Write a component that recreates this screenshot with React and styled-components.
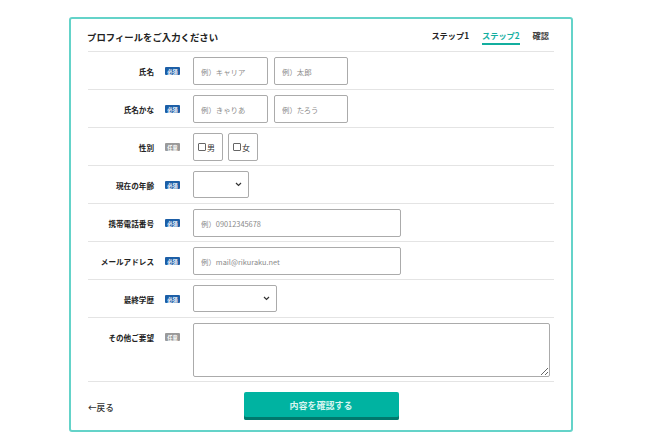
import styled, { createGlobalStyle } from "styled-components";

const GlobalStyle = createGlobalStyle`
  body {
    margin: 0;
    background: #fff;
    font-family: "Noto Sans CJK JP", "Noto Sans", sans-serif;
    color: #222;
  }
`;

const fields = [
  { label: "氏名", required: true, type: "pair", placeholders: ["例）キャリア", "例）太郎"] },
  { label: "氏名かな", required: true, type: "pair", placeholders: ["例）きゃりあ", "例）たろう"] },
  { label: "性別", required: false, type: "gender" },
  { label: "現在の年齢", required: true, type: "select", width: 56 },
  { label: "携帯電話番号", required: true, type: "text", placeholder: "例）09012345678" },
  { label: "メールアドレス", required: true, type: "text", placeholder: "例）mail@rikuraku.net" },
  { label: "最終学歴", required: true, type: "select", width: 84 },
  { label: "その他ご要望", required: false, type: "textarea" },
];

const Page = () => {
  const renderField = (f) => {
    if (f.type === "pair") {
      return (
        <Inline>
          <TextInput $w={75} placeholder={f.placeholders[0]} />
          <TextInput $w={74} placeholder={f.placeholders[1]} />
        </Inline>
      );
    }
    if (f.type === "gender") {
      return (
        <Inline>
          <CheckItem>
            <input type="checkbox" />
            <span>男</span>
          </CheckItem>
          <CheckItem>
            <input type="checkbox" />
            <span>女</span>
          </CheckItem>
        </Inline>
      );
    }
    if (f.type === "select") {
      return (
        <SelectWrap $w={f.width}>
          <Select defaultValue="">
            <option value=""></option>
          </Select>
          <svg width="7" height="5" viewBox="0 0 7 5">
            <path d="M1 1l2.5 2.5L6 1" fill="none" stroke="#333" strokeWidth="1.2" />
          </svg>
        </SelectWrap>
      );
    }
    if (f.type === "textarea") {
      return <TextArea />;
    }
    return <TextInput $w={208} placeholder={f.placeholder} />;
  };

  return (
    <Wrapper>
      <Card>
        <Header>
          <Title>プロフィールをご入力ください</Title>
          <Steps>
            <Step>ステップ1</Step>
            <Step $active>ステップ2</Step>
            <Step $muted>確認</Step>
          </Steps>
        </Header>
        {fields.map((f) => (
          <Row key={f.label}>
            <LabelCell>
              <Label>{f.label}</Label>
              <Badge $required={f.required}>{f.required ? "必須" : "任意"}</Badge>
            </LabelCell>
            <FieldCell>{renderField(f)}</FieldCell>
          </Row>
        ))}
        <Footer>
          <BackLink href="#">←戻る</BackLink>
          <SubmitButton type="button">内容を確認する</SubmitButton>
          <span />
        </Footer>
      </Card>
    </Wrapper>
  );
};

const Wrapper = styled.div`
  padding: 17px 0 0 69px;
`;

const Card = styled.div`
  box-sizing: content-box;
  width: 466px;
  border: 2px solid #64d3c9;
  border-radius: 3px;
  padding: 0 17px;
`;

const Header = styled.div`
  display: flex;
  align-items: flex-end;
  justify-content: space-between;
  box-sizing: border-box;
  height: 33px;
  padding-bottom: 6px;
  border-bottom: 1px solid #e4e4e4;
`;

const Title = styled.h1`
  margin: 0 0 0 -1px;
  padding-bottom: 1px;
  font-size: 9.4px;
  line-height: 14px;
  font-weight: 700;
  color: #222;
`;

const Steps = styled.div`
  display: flex;
  gap: 13px;
  padding-right: 5px;
`;

const Step = styled.span`
  font-size: 8.2px;
  line-height: 12px;
  font-weight: 700;
  padding-bottom: 2px;
  color: ${({ $active, $muted }) => ($active ? "#13ae9f" : $muted ? "#3a3a3a" : "#222")};
  border-bottom: 2px solid ${({ $active }) => ($active ? "#13ae9f" : "transparent")};
`;

const Row = styled.div`
  display: grid;
  grid-template-columns: 93px 1fr;
  column-gap: 12px;
  align-items: start;
  padding: 5px 0 4px;
  border-bottom: 1px solid #e4e4e4;
`;

const LabelCell = styled.div`
  height: 28px;
  display: flex;
  align-items: center;
  justify-content: flex-end;
  gap: 11px;
  padding-right: 1px;
`;

const FieldCell = styled.div`
  display: flex;
`;

const Label = styled.span`
  font-size: 7.6px;
  font-weight: 700;
  color: #222;
  white-space: nowrap;
`;

const Badge = styled.span`
  width: 15px;
  height: 8px;
  display: flex;
  align-items: center;
  justify-content: center;
  font-size: 5.2px;
  font-weight: 700;
  color: #fff;
  border-radius: 1px;
  background: ${({ $required }) => ($required ? "#1c5ea6" : "#9a9a9a")};
`;

const Inline = styled.div`
  display: flex;
  gap: 6px;
`;

const TextInput = styled.input`
  width: ${({ $w }) => $w}px;
  height: 28px;
  box-sizing: border-box;
  border: 1px solid #ababab;
  border-radius: 2px;
  padding: 0 7px;
  font-family: inherit;
  font-size: 7.4px;
  outline: none;
  &::placeholder {
    color: #8a8a8a;
  }
`;

const CheckItem = styled.label`
  width: 30px;
  height: 28px;
  box-sizing: border-box;
  border: 1px solid #ababab;
  border-radius: 2px;
  display: flex;
  align-items: center;
  padding-left: 4px;
  gap: 1px;
  font-size: 8px;
  color: #333;
  input {
    appearance: none;
    width: 8px;
    height: 8px;
    margin: 0;
    border: 1px solid #666;
    border-radius: 1px;
    background: #fff;
  }
  &:nth-child(2) {
    margin-left: -1px;
  }
`;

const SelectWrap = styled.div`
  position: relative;
  width: ${({ $w }) => $w}px;
  height: 27px;
  svg {
    position: absolute;
    right: 7px;
    top: 11px;
    pointer-events: none;
  }
`;

const Select = styled.select`
  display: block;
  appearance: none;
  width: 100%;
  height: 100%;
  box-sizing: border-box;
  border: 1px solid #ababab;
  border-radius: 2px;
  background: #fff;
  outline: none;
`;

const TextArea = styled.textarea`
  display: block;
  width: 357px;
  height: 54px;
  box-sizing: border-box;
  border: 1px solid #ababab;
  border-radius: 2px;
  outline: none;
  font-family: inherit;
`;

const Footer = styled.div`
  display: grid;
  grid-template-columns: 1fr auto 1fr;
  align-items: center;
  padding: 10px 0;
`;

const BackLink = styled.a`
  justify-self: start;
  padding-top: 2px;
  font-size: 8.6px;
  font-weight: 500;
  color: #333;
  text-decoration: none;
`;

const SubmitButton = styled.button`
  width: 155px;
  height: 28px;
  border: none;
  border-radius: 2px;
  background: #00b3a1;
  box-shadow: inset 0 -3px 0 #00796d;
  color: #d6f5f0;
  font-family: inherit;
  font-size: 9px;
  font-weight: 700;
  padding-bottom: 2px;
`;

export default function App() {
  return (
    <>
      <GlobalStyle />
      <Page />
    </>
  );
}
